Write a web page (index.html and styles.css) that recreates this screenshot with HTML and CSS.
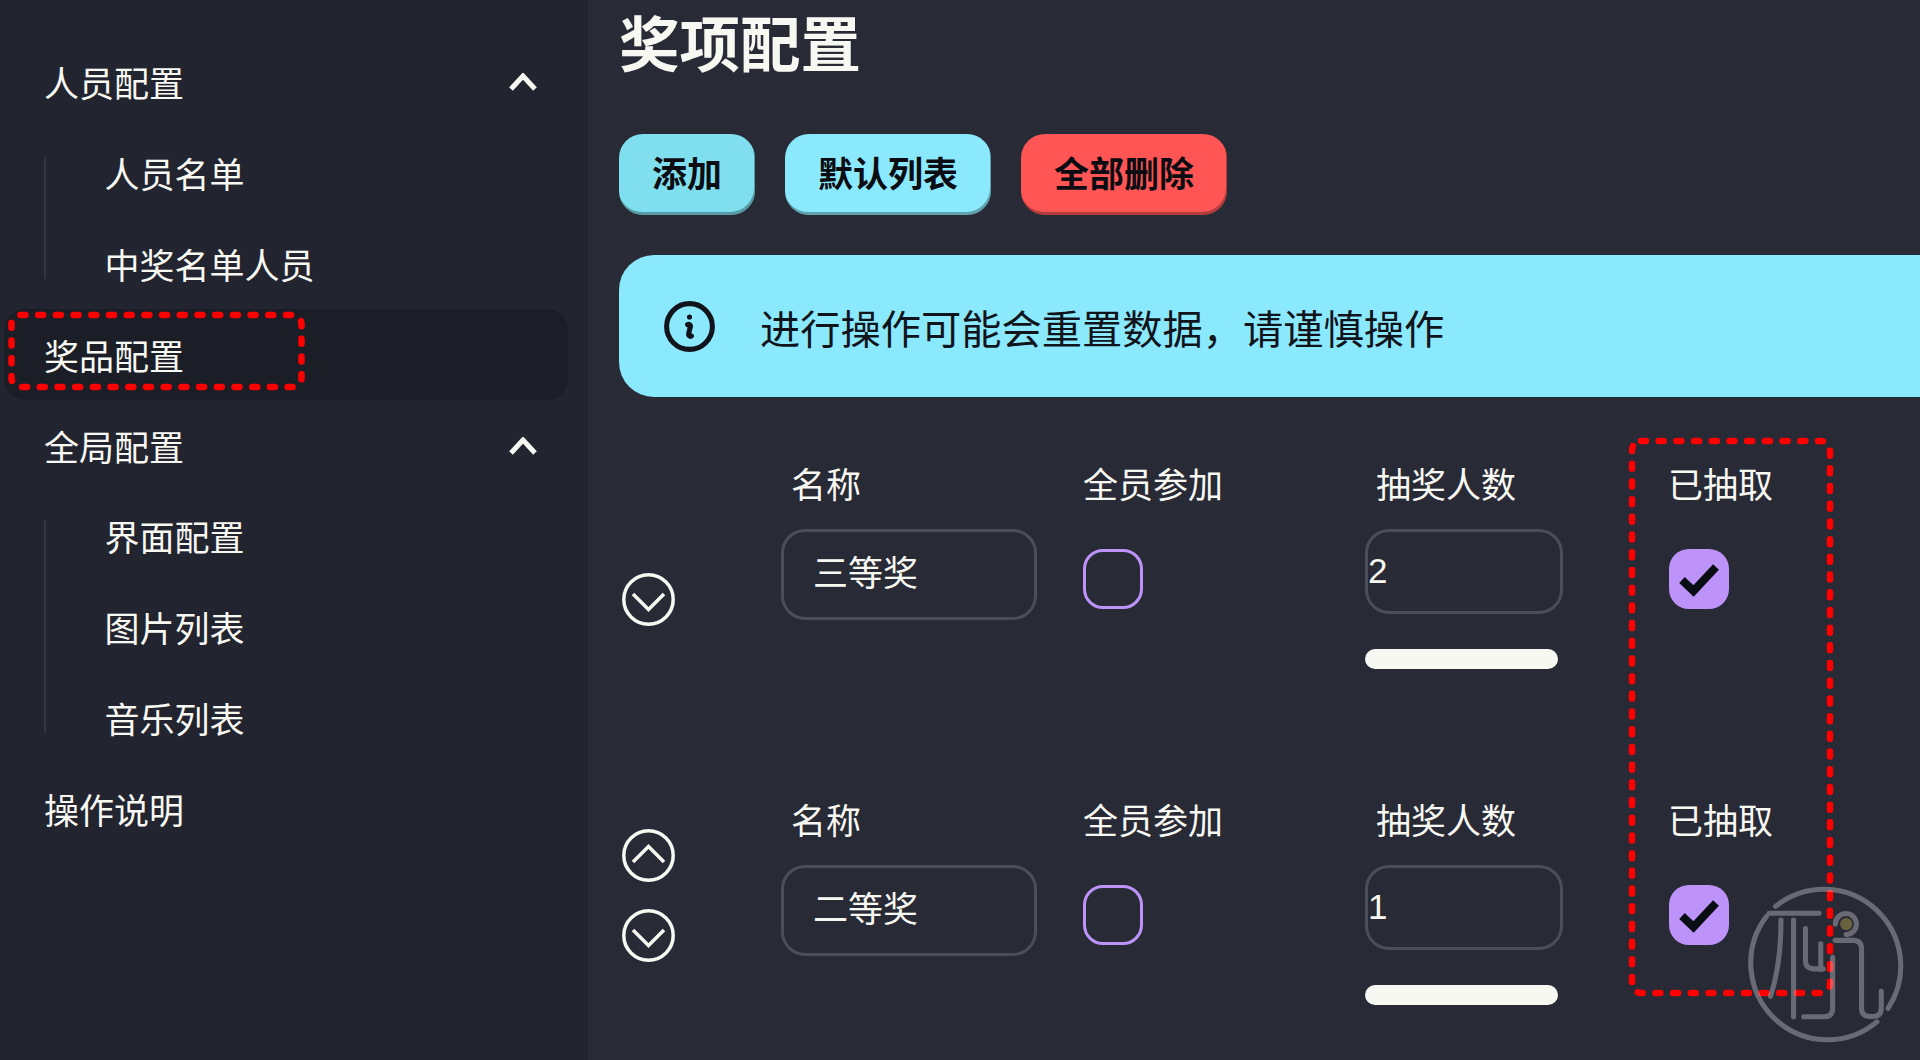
FILE: index.html
```html
<!DOCTYPE html>
<html lang="zh-CN">
<head>
<meta charset="utf-8">
<title>奖项配置</title>
<link rel="stylesheet" href="styles.css">
</head>
<body>
<div class="app">
  <aside class="sidebar">
    <div class="menu-row"><span>人员配置</span>
      <svg class="caret" viewBox="0 0 28 18"><path d="M2 16 14 3l12 13"/></svg></div>
    <div class="sublist">
      <div class="menu-row sub">人员名单</div>
      <div class="menu-row sub">中奖名单人员</div>
    </div>
    <div class="menu-row active">奖品配置</div>
    <div class="menu-row"><span>全局配置</span>
      <svg class="caret" viewBox="0 0 28 18"><path d="M2 16 14 3l12 13"/></svg></div>
    <div class="sublist">
      <div class="menu-row sub">界面配置</div>
      <div class="menu-row sub">图片列表</div>
      <div class="menu-row sub">音乐列表</div>
    </div>
    <div class="menu-row">操作说明</div>
  </aside>

  <main class="main">
    <h1 class="title">奖项配置</h1>
    <div class="actions">
      <button class="btn btn-add">添加</button>
      <button class="btn btn-info">默认列表</button>
      <button class="btn btn-danger">全部删除</button>
    </div>
    <div class="alert">
      <svg class="alert-icon" viewBox="0 0 24 24"><path d="M11.25 11.25l.041-.02a.75.75 0 011.063.852l-.708 2.836a.75.75 0 001.063.853l.041-.021M21 12a9 9 0 11-18 0 9 9 0 0118 0zm-9-3.75h.008v.008H12V8.25z"/></svg>
      <span>进行操作可能会重置数据，请谨慎操作</span>
    </div>

    <section class="prize-row">
      <div class="arrows">
        <svg class="arrow" viewBox="0 0 53 53"><circle cx="26.5" cy="26.5" r="24.7"/><path d="M11 21l15.5 15.5L42 21"/></svg>
      </div>
      <div class="col">
        <div class="label label-inset">名称</div>
        <div class="field field-name">三等奖</div>
      </div>
      <div class="col">
        <div class="label">全员参加</div>
        <div class="check"></div>
      </div>
      <div class="col">
        <div class="label label-count">抽奖人数</div>
        <div class="field field-count">2</div>
        <div class="slider"></div>
      </div>
      <div class="col">
        <div class="label">已抽取</div>
        <div class="check checked"><svg viewBox="0 0 60 60"><path d="M13 31l11.5 11L47 18"/></svg></div>
      </div>
    </section>

    <section class="prize-row">
      <div class="arrows">
        <svg class="arrow" viewBox="0 0 53 53"><circle cx="26.5" cy="26.5" r="24.7"/><path d="M11 33l15.5-15.5L42 33"/></svg>
        <svg class="arrow" viewBox="0 0 53 53"><circle cx="26.5" cy="26.5" r="24.7"/><path d="M11 21l15.5 15.5L42 21"/></svg>
      </div>
      <div class="col">
        <div class="label label-inset">名称</div>
        <div class="field field-name">二等奖</div>
      </div>
      <div class="col">
        <div class="label">全员参加</div>
        <div class="check"></div>
      </div>
      <div class="col">
        <div class="label label-count">抽奖人数</div>
        <div class="field field-count">1</div>
        <div class="slider"></div>
      </div>
      <div class="col">
        <div class="label">已抽取</div>
        <div class="check checked"><svg viewBox="0 0 60 60"><path d="M13 31l11.5 11L47 18"/></svg></div>
      </div>
    </section>
  </main>
</div>

<svg class="annotations" viewBox="0 0 1920 1060">
  <rect x="11.5" y="315" width="290" height="72" rx="9"/>
  <rect x="1632" y="441" width="198" height="552" rx="9"/>
</svg>

<svg class="watermark" viewBox="440 380 465 465">
  <path d="M527 440A226 226 0 0 1 858 740"/>
  <path d="M825 780A226 226 0 0 1 500 470"/>
  <path d="M508 460H655"/>
  <path d="M543 480C543 580 530 650 512 705"/>
  <path d="M580 480V765"/>
  <path d="M615 505V600Q615 622 637 624H667"/>
  <path d="M660 550V625"/>
  <path d="M610 765H670Q695 765 695 740V590"/>
  <path d="M703 492A31 31 0 1 1 735 523"/>
  <path d="M702 540H755Q780 540 780 565V740Q780 764 805 764H815Q838 764 838 740V690"/>
  <circle class="wm-dot" cx="735" cy="492" r="18"/>
</svg>
</body>
</html>
```
FILE: styles.css
```css
* { box-sizing: border-box; }

html, body {
  margin: 0;
  height: 1060px;
  overflow: hidden;
  background: #282a36;
}

body {
  position: relative;
  font-family: "Noto Sans CJK SC", "Liberation Sans", sans-serif;
  font-size: 35px;
  color: #f8f8f2;
}

.app {
  display: flex;
  height: 1060px;
}

.sidebar {
  flex: 0 0 588px;
  padding: 36.5px 20px 0 4px;
  background: #22242f;
}

.menu-row {
  display: flex;
  align-items: center;
  justify-content: space-between;
  height: 90.9px;
  padding: 0 31px 0 40px;
  line-height: 52px;
}

.menu-row.sub {
  padding-left: 100.5px;
}

.menu-row.active {
  height: 91px;
  margin-top: -0.5px;
  margin-bottom: 0.4px;
  padding-top: 2.5px;
  border-radius: 21px;
  background: #1c1e27;
}

.sublist {
  position: relative;
}

.sublist::before {
  content: "";
  position: absolute;
  left: 40px;
  top: 29.5px;
  bottom: 30.5px;
  width: 2px;
  background: #33353f;
}

.caret {
  width: 28px;
  height: 18px;
  fill: none;
  stroke: #f8f8f2;
  stroke-width: 5;
}

.main {
  flex: 1;
  min-width: 0;
  padding-left: 31px;
}

.title {
  margin: 0;
  height: 134px;
  font-size: 60.5px;
  font-weight: 700;
  line-height: 82px;
}

.actions {
  display: flex;
  gap: 30px;
  margin-bottom: 40px;
}

.btn {
  height: 81px;
  padding: 0 33px 7px;
  border: 0;
  border-radius: 24px;
  font: 700 35px "Noto Sans CJK SC", "Liberation Sans", sans-serif;
  color: #0c0d12;
  box-shadow: inset -1px -3px 0 rgba(0, 0, 0, .3);
}

.btn-add { background: #7fdfef; }
.btn-info { background: #8be9fd; }
.btn-danger { background: #ff5555; }

.alert {
  display: flex;
  align-items: center;
  gap: 40px;
  height: 142px;
  margin-bottom: 61px;
  padding-left: 40px;
  border-radius: 35px 0 0 35px;
  background: #8be9fd;
  color: #12141c;
  font-size: 40.25px;
}

.alert-icon {
  flex: none;
  width: 61px;
  height: 61px;
  fill: none;
  stroke: #12141c;
  stroke-width: 2;
  stroke-linecap: round;
  stroke-linejoin: round;
}

.prize-row {
  display: grid;
  grid-template-columns: 162px 302px 282px 303px 200px;
  height: 336px;
}

.prize-row:last-child {
  height: 266px;
}

.arrows {
  display: flex;
  flex-direction: column;
  justify-content: flex-end;
  gap: 27px;
  height: 168px;
  padding-left: 3px;
}

.arrow {
  width: 53px;
  height: 53px;
  fill: none;
  stroke: #f8f8f2;
  stroke-width: 3.5;
}

.label {
  height: 52px;
  margin-top: -1px;
  margin-bottom: 20px;
  line-height: 52px;
}

.label-inset { padding-left: 10px; }
.label-count { padding-left: 11px; }

.field {
  display: flex;
  align-items: center;
  border: 3px solid #4b4d58;
  border-radius: 24px;
}

.field-name {
  width: 256px;
  height: 91px;
  padding: 0 0 9px 29px;
}

.field-count {
  width: 198px;
  height: 85px;
  padding-bottom: 2px;
  font-family: "Liberation Sans", sans-serif;
}

.slider {
  width: 193px;
  height: 20px;
  margin-top: 35px;
  border-radius: 10px;
  background: #f8f8f2;
}

.check {
  width: 60px;
  height: 60px;
  margin-top: 40px;
  border: 3px solid #bd93f9;
  border-radius: 20px;
}

.check.checked {
  margin-left: 1px;
  background: #bd93f9;
  border: 0;
}

.check svg {
  display: block;
  width: 60px;
  height: 60px;
  fill: none;
  stroke: #0b0d14;
  stroke-width: 8;
}

.annotations {
  position: absolute;
  inset: 0;
  width: 1920px;
  height: 1060px;
  fill: none;
  stroke: #ff0000;
  stroke-width: 6.5;
  stroke-linecap: round;
  stroke-dasharray: 5 12.7;
}

.watermark {
  position: absolute;
  left: 1746px;
  top: 886px;
  width: 158px;
  height: 158px;
  fill: none;
  stroke: #ffffff;
  stroke-width: 15;
  stroke-linecap: round;
  opacity: .3;
}

.watermark .wm-dot {
  fill: #ffe24a;
  stroke: none;
}
```
